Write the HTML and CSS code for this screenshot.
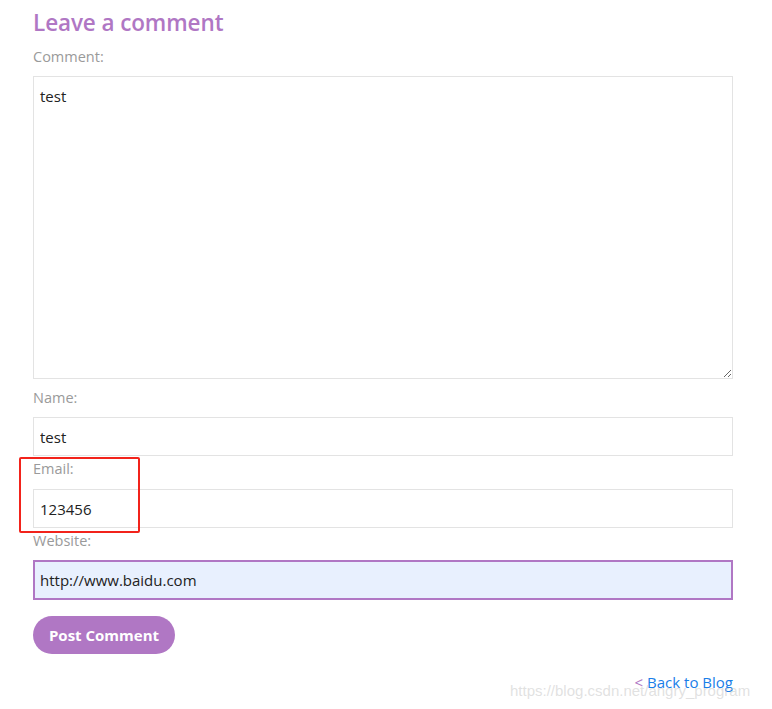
FILE: index.html
```html
<!DOCTYPE html>
<html>
<head>
<meta charset="utf-8">
<link rel="stylesheet" href="styles.css">
</head>
<body>
<div class="page">
  <h2 class="title">Leave a comment</h2>
  <form class="form">
    <label class="label">Comment:</label>
    <textarea class="area">test</textarea>
    <label class="label">Name:</label>
    <input class="field" type="text" value="test">
    <label class="label">Email:</label>
    <input class="field" type="text" value="123456">
    <label class="label label-tight">Website:</label>
    <input class="field field-active" type="text" value="http://www.baidu.com">
    <button class="btn" type="button">Post Comment</button>
  </form>
  <div class="back"><span class="lt">&lt;</span> <a class="back-link" href="#">Back to Blog</a></div>
  <div class="mark"></div>
  <div class="watermark">https://blog.csdn.net/angry_program</div>
</div>
</body>
</html>
```
FILE: styles.css
```css
html, body {
  margin: 0;
  padding: 0;
  background: #fff;
}
body {
  font-family: "Open Sans", "Noto Sans", sans-serif;
}
.page {
  position: relative;
  width: 700px;
  padding: 7px 0 0 33px;
  height: 702px;
}
.title {
  margin: 0;
  font-size: 22.5px;
  font-weight: 600;
  color: #b077c4;
  line-height: 31px;
  letter-spacing: -0.1px;
}
.form {
  display: flex;
  flex-direction: column;
  align-items: flex-start;
}
.label {
  font-size: 14.5px;
  color: #9a9a9a;
  line-height: 20px;
  margin: 9px 0 9px;
}
.area, .field {
  box-sizing: border-box;
  width: 700px;
  border: 1px solid #e3e3e3;
  font-family: "Open Sans", "Noto Sans", sans-serif;
  font-size: 15px;
  color: #222;
  padding: 0 6px;
  margin: 0;
  outline: none;
  background: #fff;
}
.area {
  height: 303px;
  padding-top: 7px;
  line-height: 24px;
  resize: vertical;
}
.field {
  height: 39px;
}
.field + .label {
  margin-top: 3px;
  margin-bottom: 10px;
}
.field + .label-tight {
  margin-bottom: 9px;
}
.field-active {
  border: 2px solid #b077c4;
  background: #e8f0fe;
  height: 40px;
  padding-left: 5px;
}
.btn {
  margin-top: 16px;
  height: 38px;
  width: 142px;
  border: none;
  border-radius: 19px;
  background: #b077c4;
  color: #fff;
  font-family: "Open Sans", "Noto Sans", sans-serif;
  font-weight: 700;
  font-size: 15px;
  padding: 0;
}
.back {
  width: 700px;
  text-align: right;
  margin-top: 18px;
  font-size: 15px;
  line-height: 20px;
}
.lt {
  color: #b077c4;
}
.back-link {
  color: #1a7ee8;
  text-decoration: none;
}
.mark {
  position: absolute;
  left: 19px;
  top: 457px;
  width: 117px;
  height: 72px;
  border: 2px solid #f2231b;
  border-radius: 2px;
}
.watermark {
  position: absolute;
  left: 510px;
  top: 682px;
  font-family: "Liberation Sans", Arial, sans-serif;
  font-size: 15px;
  color: rgba(200, 200, 200, 0.55);
  white-space: nowrap;
}
```
